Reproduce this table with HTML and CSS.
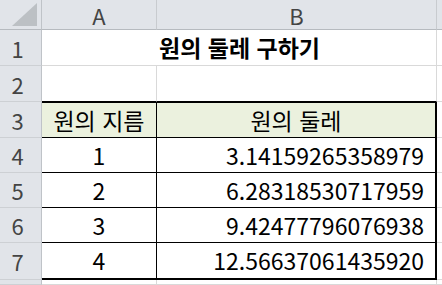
FILE: index.html
```html
<!DOCTYPE html>
<html lang="ko">
<head>
<meta charset="utf-8">
<title>원의 둘레 구하기</title>
<link rel="stylesheet" href="styles.css">
</head>
<body>
<div class="sheet">
  <div class="corner"><svg class="tri" width="41" height="29" viewBox="0 0 41 29"><polygon points="37,3 37,26 12,26" fill="#bcc0c4"/></svg></div>
  <div class="ch">A</div>
  <div class="ch">B</div>
  <div class="ch last"></div>

  <div class="rh">1</div>
  <div class="cell title">원의 둘레 구하기</div>
  <div class="cell c"></div>

  <div class="rh">2</div>
  <div class="cell above"></div>
  <div class="cell above"></div>
  <div class="cell c"></div>

  <div class="rh">3</div>
  <div class="cell ta head first">원의 지름</div>
  <div class="cell tb head first">원의 둘레</div>
  <div class="cell c"></div>

  <div class="rh">4</div>
  <div class="cell ta">1</div>
  <div class="cell tb num">3.14159265358979</div>
  <div class="cell c"></div>

  <div class="rh">5</div>
  <div class="cell ta">2</div>
  <div class="cell tb num">6.28318530717959</div>
  <div class="cell c"></div>

  <div class="rh">6</div>
  <div class="cell ta">3</div>
  <div class="cell tb num">9.42477796076938</div>
  <div class="cell c"></div>

  <div class="rh">7</div>
  <div class="cell ta lastrow">4</div>
  <div class="cell tb num lastrow">12.56637061435920</div>
  <div class="cell c"></div>

  <div class="rh"></div>
  <div class="cell"></div>
  <div class="cell"></div>
  <div class="cell c"></div>
</div>
</body>
</html>
```
FILE: styles.css
```css
html, body {
  margin: 0;
  padding: 0;
  background: #ffffff;
}
body {
  width: 442px;
  height: 285px;
  overflow: hidden;
  font-family: "Noto Sans CJK KR", "Noto Sans", sans-serif;
}
.sheet {
  display: grid;
  grid-template-columns: 42px 115px 280px 1fr;
  grid-template-rows: 30px 36px 36px 36px 35px 35px 35px 37px 1fr;
  width: 442px;
  height: 285px;
  overflow: hidden;
}
.sheet > div {
  box-sizing: border-box;
  display: flex;
  align-items: center;
  justify-content: center;
  line-height: 1;
  white-space: nowrap;
}
.corner {
  background: #e1e4e9;
  border-right: 1px solid #bfc3c8;
  border-bottom: 1px solid #b6babf;
  position: relative;
}
.tri {
  position: absolute;
  left: 0;
  top: 0;
}
.ch {
  background: #e1e4e9;
  border-right: 1px solid #c8cbcf;
  border-bottom: 1px solid #b6babf;
  color: #444444;
  font-size: 22px;
  padding-top: 1px;
}
.ch.last {
  border-right: none;
}
.rh {
  background: #e1e4e9;
  border-right: 1px solid #bfc3c8;
  border-bottom: 1px solid #cdd0d4;
  color: #444444;
  font-size: 22px;
  padding-right: 6px;
}
.cell {
  border-right: 1px solid #d9d9d9;
  border-bottom: 1px solid #d9d9d9;
  color: #000000;
  font-size: 23px;
}
.cell.c {
  border-right: none;
}
.title {
  grid-column: span 2;
  font-weight: bold;
  padding-left: 1px;
}
.above {
  border-bottom-color: #000000;
}
.ta {
  border-right: 1px solid #000000;
  border-bottom: 1px solid #000000;
}
.tb {
  border-right: 2px solid #000000;
  border-bottom: 1px solid #000000;
}
.first {
  border-top: 1px solid #000000;
}
.head {
  background: #ebf1de;
}
.sheet > .num {
  justify-content: flex-end;
  padding-right: 11px;
}
.lastrow {
  border-bottom-width: 2px;
}
```
